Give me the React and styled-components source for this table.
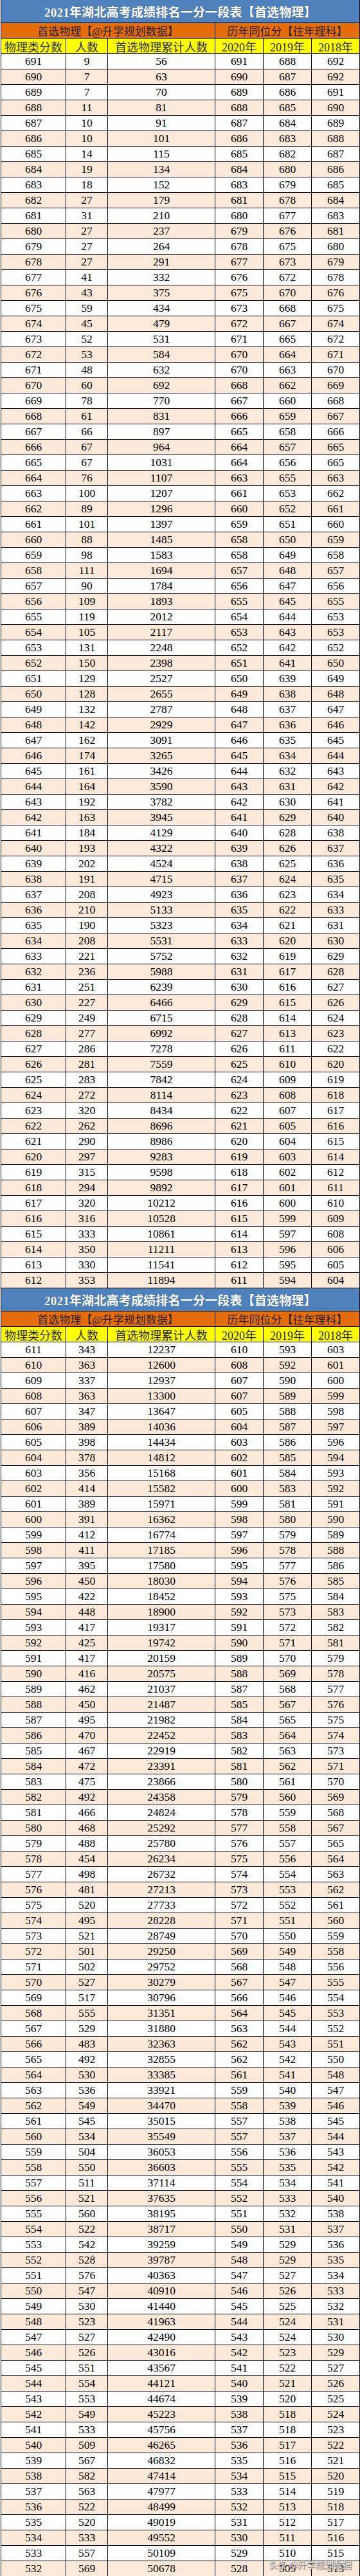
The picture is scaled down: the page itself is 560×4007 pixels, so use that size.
import React from 'react';
import styled, { createGlobalStyle } from 'styled-components';

const GlobalStyle = createGlobalStyle`
  html, body { margin: 0; padding: 0; background: #ffffff; }
  body { width: 560px; }
`;

const SECTION1 = `691 9 56 691 688 692
690 7 63 690 687 692
689 7 70 689 686 691
688 11 81 688 685 690
687 10 91 687 684 689
686 10 101 686 683 688
685 14 115 685 682 687
684 19 134 684 680 686
683 18 152 683 679 685
682 27 179 681 678 684
681 31 210 680 677 683
680 27 237 679 676 681
679 27 264 678 675 680
678 27 291 677 673 679
677 41 332 676 672 678
676 43 375 675 670 676
675 59 434 673 668 675
674 45 479 672 667 674
673 52 531 671 665 672
672 53 584 670 664 671
671 48 632 670 663 670
670 60 692 668 662 669
669 78 770 667 660 668
668 61 831 666 659 667
667 66 897 665 658 666
666 67 964 664 657 665
665 67 1031 664 656 665
664 76 1107 663 655 663
663 100 1207 661 653 662
662 89 1296 660 652 661
661 101 1397 659 651 660
660 88 1485 658 650 659
659 98 1583 658 649 658
658 111 1694 657 648 657
657 90 1784 656 647 656
656 109 1893 655 645 655
655 119 2012 654 644 653
654 105 2117 653 643 653
653 131 2248 652 642 652
652 150 2398 651 641 650
651 129 2527 650 639 649
650 128 2655 649 638 648
649 132 2787 648 637 647
648 142 2929 647 636 646
647 162 3091 646 635 645
646 174 3265 645 634 644
645 161 3426 644 632 643
644 164 3590 643 631 642
643 192 3782 642 630 641
642 163 3945 641 629 640
641 184 4129 640 628 638
640 193 4322 639 626 637
639 202 4524 638 625 636
638 191 4715 637 624 635
637 208 4923 636 623 634
636 210 5133 635 622 633
635 190 5323 634 621 631
634 208 5531 633 620 630
633 221 5752 632 619 629
632 236 5988 631 617 628
631 251 6239 630 616 627
630 227 6466 629 615 626
629 249 6715 628 614 624
628 277 6992 627 613 623
627 286 7278 626 611 622
626 281 7559 625 610 620
625 283 7842 624 609 619
624 272 8114 623 608 618
623 320 8434 622 607 617
622 262 8696 621 605 616
621 290 8986 620 604 615
620 297 9283 619 603 614
619 315 9598 618 602 612
618 294 9892 617 601 611
617 320 10212 616 600 610
616 316 10528 615 599 609
615 333 10861 614 597 608
614 350 11211 613 596 606
613 330 11541 612 595 605
612 353 11894 611 594 604`;

const SECTION2 = `611 343 12237 610 593 603
610 363 12600 608 592 601
609 337 12937 607 590 600
608 363 13300 607 589 599
607 347 13647 605 588 598
606 389 14036 604 587 597
605 398 14434 603 586 596
604 378 14812 602 585 594
603 356 15168 601 584 593
602 414 15582 600 583 592
601 389 15971 599 581 591
600 391 16362 598 580 590
599 412 16774 597 579 589
598 411 17185 596 578 588
597 395 17580 595 577 586
596 450 18030 594 576 585
595 422 18452 593 575 584
594 448 18900 592 573 583
593 417 19317 591 572 582
592 425 19742 590 571 581
591 417 20159 589 570 579
590 416 20575 588 569 578
589 462 21037 587 568 577
588 450 21487 585 567 576
587 495 21982 584 565 575
586 470 22452 583 564 574
585 467 22919 582 563 573
584 472 23391 581 562 571
583 475 23866 580 561 570
582 492 24358 579 560 569
581 466 24824 578 559 568
580 468 25292 577 558 567
579 488 25780 576 557 565
578 454 26234 575 556 564
577 498 26732 574 554 563
576 481 27213 573 553 562
575 520 27733 572 552 561
574 495 28228 571 551 560
573 521 28749 570 550 559
572 501 29250 569 549 558
571 502 29752 568 548 556
570 527 30279 567 547 555
569 517 30796 566 546 554
568 555 31351 564 545 553
567 529 31880 563 544 552
566 483 32363 562 543 551
565 492 32855 562 542 550
564 530 33385 561 541 548
563 536 33921 559 540 547
562 549 34470 558 539 546
561 545 35015 557 538 545
560 534 35549 557 537 544
559 504 36053 556 536 543
558 550 36603 555 535 542
557 511 37114 554 534 541
556 521 37635 552 533 540
555 560 38195 551 532 538
554 522 38717 550 531 537
553 542 39259 549 529 536
552 528 39787 548 529 535
551 576 40363 547 527 534
550 547 40910 546 526 533
549 530 41440 545 525 532
548 523 41963 544 524 531
547 527 42490 543 524 530
546 526 43016 542 523 529
545 551 43567 541 522 527
544 554 44121 540 521 526
543 553 44674 539 520 525
542 549 45223 538 518 524
541 533 45756 537 518 523
540 509 46265 536 517 522
539 567 46832 535 516 521
538 582 47414 534 515 520
537 563 47977 533 514 519
536 522 48499 532 513 518
535 520 49019 531 512 517
534 533 49552 530 511 516
533 557 50109 529 510 515
532 569 50678 528 509 513`;

const parse = (txt) => txt.trim().split('\n').map((l) => l.trim().split(/\s+/));

const HEADERS = ['物理类分数', '人数', '首选物理累计人数', '2020年', '2019年', '2018年'];

const Page = styled.div`
  position: relative;
  width: 560px;
  display: flex;
  flex-direction: column;
`;

const Sheet = styled.div`
  display: grid;
  grid-template-columns: 100px 64px 166px 74px 74px 74px;
  grid-template-rows: 35px 23px 23px repeat(80, 23px);
  gap: 1px;
  background: #000000;
  padding: 0 1px 1px 1px;
  margin-left: 1px;
  width: 559px;
  box-sizing: border-box;
`;

const Title = styled.div`
  grid-column: 1 / -1;
  background: #4f81bd;
  color: #ffffff;
  font-family: "Liberation Serif", "Noto Sans CJK SC", serif;
  font-weight: bold;
  font-size: 19px;
  display: flex;
  align-items: center;
  justify-content: center;
  letter-spacing: 0.2px;
  text-shadow: 0 0 1px rgba(40, 60, 90, 0.6);
`;

const Group = styled.div`
  grid-column: span 3;
  background: #e46c0a;
  color: #2b2118;
  font-family: "Liberation Serif", "Noto Sans CJK SC", serif;
  font-size: 17px;
  display: flex;
  align-items: center;
  justify-content: center;
`;

const HeadCell = styled.div`
  background: #ffff00;
  color: #2a2a1a;
  font-family: "Liberation Serif", "Noto Sans CJK SC", serif;
  font-size: 18px;
  display: flex;
  align-items: center;
  justify-content: center;
  white-space: nowrap;
  overflow: hidden;
`;

const Cell = styled.div`
  background: ${(p) => (p.$alt ? '#fde9d9' : '#ffffff')};
  color: #000000;
  font-family: "Liberation Serif", "Noto Serif", serif;
  font-size: 17.5px;
  display: flex;
  align-items: center;
  justify-content: center;
  line-height: 1;
`;

const Watermark = styled.div`
  position: absolute;
  right: 13px;
  bottom: 9px;
  font-family: "Noto Sans CJK SC", sans-serif;
  font-size: 14px;
  color: rgba(250, 250, 250, 0.9);
  text-shadow: 0 0 1px #555, 1px 1px 1px rgba(0, 0, 0, 0.55);
  pointer-events: none;
  white-space: nowrap;
`;

const Section = ({ rows }) => (
  <Sheet>
    <Title>2021年湖北高考成绩排名一分一段表【首选物理】</Title>
    <Group>首选物理【@升学规划数据】</Group>
    <Group>历年同位分【往年理科】</Group>
    {HEADERS.map((h) => (
      <HeadCell key={h}>{h}</HeadCell>
    ))}
    {rows.map((r, i) =>
      r.map((v, j) => (
        <Cell key={`${i}-${j}`} $alt={i % 2 === 1}>
          {v}
        </Cell>
      ))
    )}
  </Sheet>
);

export default function App() {
  return (
    <>
      <GlobalStyle />
      <Page>
        <Section rows={parse(SECTION1)} />
        <Section rows={parse(SECTION2)} />
        <Watermark>头条 @升学规划数据</Watermark>
      </Page>
    </>
  );
}
